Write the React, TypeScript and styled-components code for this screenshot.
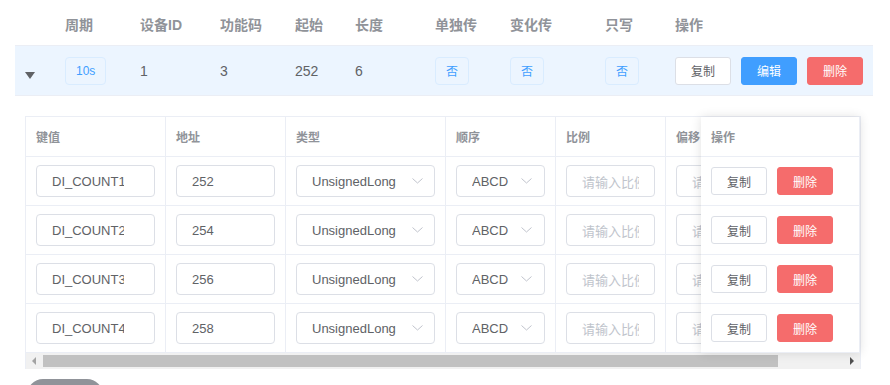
import React from "react";
import styled, { createGlobalStyle } from "styled-components";

const GlobalStyle = createGlobalStyle`
  html, body {
    margin: 0;
    padding: 0;
    background: #fff;
    font-family: "Liberation Sans", "Noto Sans CJK SC", sans-serif;
  }
`;

const Page = styled.div`
  width: 890px;
  height: 385px;
  overflow: hidden;
  padding-left: 15px;
  box-sizing: border-box;
`;

const OuterTable = styled.div`
  width: 858px;
`;

const HeadRow = styled.div`
  display: flex;
  height: 46px;
  border-bottom: 1px solid #ebeef5;
  box-sizing: border-box;
`;

const MainRow = styled.div`
  display: flex;
  height: 50px;
  background: #ecf5ff;
  border-bottom: 1px solid #ebeef5;
  box-sizing: border-box;
`;

const Cell = styled.div<{ $w?: number; $head?: boolean }>`
  ${(p) => (p.$w ? `width: ${p.$w}px; flex: none;` : "flex: 1;")}
  display: flex;
  align-items: center;
  gap: 10px;
  padding-left: 10px;
  box-sizing: border-box;
  font-size: 14px;
  color: ${(p) => (p.$head ? "#909399" : "#606266")};
  font-weight: ${(p) => (p.$head ? 700 : 400)};
  padding-top: ${(p) => (p.$head ? "2px" : "0")};
`;

const Caret = styled.span`
  width: 0;
  height: 0;
  border-left: 5.5px solid transparent;
  border-right: 5.5px solid transparent;
  border-top: 7px solid #606266;
  margin-top: 10px;
`;

const Tag = styled.span`
  display: inline-flex;
  align-items: center;
  height: 28px;
  padding: 0 10px;
  box-sizing: border-box;
  border: 1px solid #d9ecff;
  background: #ecf5ff;
  color: #409eff;
  border-radius: 4px;
  font-size: 12px;
`;

const Button = styled.button<{ $kind?: "default" | "primary" | "danger" }>`
  width: 56px;
  height: 28px;
  padding: 0;
  border-radius: 3px;
  font-size: 12px;
  font-family: inherit;
  box-sizing: border-box;
  cursor: pointer;
  border: 1px solid
    ${(p) => (p.$kind === "primary" ? "#409eff" : p.$kind === "danger" ? "#f56c6c" : "#dcdfe6")};
  background: ${(p) => (p.$kind === "primary" ? "#409eff" : p.$kind === "danger" ? "#f56c6c" : "#fff")};
  color: ${(p) => (p.$kind && p.$kind !== "default" ? "#fff" : "#606266")};
`;

const Expanded = styled.div`
  padding: 20px 0 0 10px;
`;

const InnerWrap = styled.div`
  position: relative;
  width: 836px;
  border-left: 1px solid #ebeef5;
  border-right: 1px solid #ebeef5;
  border-top: 1px solid #ebeef5;
  box-sizing: border-box;
`;

const Scroller = styled.div`
  overflow: hidden;
`;

const InnerTable = styled.div`
  width: 1200px;
`;

const IRow = styled.div<{ $head?: boolean }>`
  display: flex;
  height: ${(p) => (p.$head ? 40 : 49)}px;
`;

const ICell = styled.div<{ $w: number }>`
  width: ${(p) => p.$w}px;
  flex: none;
  display: flex;
  align-items: center;
  gap: 10px;
  padding: 0 10px;
  box-sizing: border-box;
  border-right: 1px solid #ebeef5;
  border-bottom: 1px solid #ebeef5;
  font-size: 12px;
  font-weight: 700;
  color: #909399;
`;

const Field = styled.div<{ $placeholder?: boolean; $pr?: number }>`
  flex: 1;
  min-width: 0;
  height: 32px;
  display: flex;
  align-items: center;
  padding: 0 ${(p) => p.$pr ?? 15}px 0 15px;
  border: 1px solid #dcdfe6;
  border-radius: 4px;
  box-sizing: border-box;
  font-size: 13px;
  font-weight: 400;
  color: ${(p) => (p.$placeholder ? "#c0c4cc" : "#606266")};
  background: #fff;
  overflow: hidden;
  white-space: nowrap;
`;

const FieldText = styled.span`
  flex: 1;
  overflow: hidden;
`;

const FixedCol = styled.div`
  position: absolute;
  top: 0;
  right: 0;
  width: 159px;
  background: #fff;
  box-shadow: 0 0 10px rgba(0, 0, 0, 0.12);
`;

const ScrollBar = styled.div`
  display: flex;
  align-items: center;
  height: 16px;
  background: #f1f1f1;
`;

const Arrow = styled.span<{ $dir: "left" | "right"; $dark?: boolean }>`
  width: 0;
  height: 0;
  border-top: 4px solid transparent;
  border-bottom: 4px solid transparent;
  ${(p) =>
    p.$dir === "left"
      ? `border-right: 4px solid ${p.$dark ? "#505050" : "#a3a3a3"}; margin: 0 7px 0 6px;`
      : `border-left: 4px solid ${p.$dark ? "#505050" : "#a3a3a3"}; margin: 0 6px 0 auto;`}
`;

const Thumb = styled.div`
  width: 735px;
  height: 12px;
  background: #c1c1c1;
`;

const Pill = styled.div`
  margin: 10px 0 0 2px;
  width: 76px;
  height: 32px;
  border-radius: 16px;
  background: #909399;
`;

const Chevron = () => (
  <svg width="11" height="6" viewBox="0 0 11 6">
    <polyline points="0.5,0.5 5.5,5 10.5,0.5" fill="none" stroke="#c0c4cc" strokeWidth="1" />
  </svg>
);

const rows = [
  { key: "DI_COUNT1", addr: "252" },
  { key: "DI_COUNT2", addr: "254" },
  { key: "DI_COUNT3", addr: "256" },
  { key: "DI_COUNT4", addr: "258" },
];

const outerCols = [
  { w: 40, label: "" },
  { w: 75, label: "周期" },
  { w: 80, label: "设备ID" },
  { w: 75, label: "功能码" },
  { w: 60, label: "起始" },
  { w: 80, label: "长度" },
  { w: 75, label: "单独传" },
  { w: 95, label: "变化传" },
  { w: 70, label: "只写" },
];

const innerCols = [
  { w: 140, label: "键值" },
  { w: 120, label: "地址" },
  { w: 160, label: "类型" },
  { w: 110, label: "顺序" },
  { w: 110, label: "比例" },
  { w: 120, label: "偏移" },
  { w: 110, label: "小数位" },
  { w: 110, label: "单位" },
];

export default function App() {
  return (
    <>
      <GlobalStyle />
      <Page>
        <OuterTable>
          <HeadRow>
            {outerCols.map((c, i) => (
              <Cell key={i} $w={c.w} $head>
                {c.label}
              </Cell>
            ))}
            <Cell $head>操作</Cell>
          </HeadRow>
          <MainRow>
            <Cell $w={40}>
              <Caret />
            </Cell>
            <Cell $w={75}>
              <Tag>10s</Tag>
            </Cell>
            <Cell $w={80}>1</Cell>
            <Cell $w={75}>3</Cell>
            <Cell $w={60}>252</Cell>
            <Cell $w={80}>6</Cell>
            <Cell $w={75}>
              <Tag>否</Tag>
            </Cell>
            <Cell $w={95}>
              <Tag>否</Tag>
            </Cell>
            <Cell $w={70}>
              <Tag>否</Tag>
            </Cell>
            <Cell>
              <Button>复制</Button>
              <Button $kind="primary">编辑</Button>
              <Button $kind="danger">删除</Button>
            </Cell>
          </MainRow>

          <Expanded>
            <InnerWrap>
              <Scroller>
                <InnerTable>
                  <IRow $head>
                    {innerCols.map((c) => (
                      <ICell key={c.label} $w={c.w}>
                        {c.label}
                      </ICell>
                    ))}
                  </IRow>
                  {rows.map((r) => (
                    <IRow key={r.key}>
                      <ICell $w={140}>
                        <Field $pr={30}>
                          <FieldText>{r.key}</FieldText>
                        </Field>
                      </ICell>
                      <ICell $w={120}>
                        <Field>
                          <FieldText>{r.addr}</FieldText>
                        </Field>
                      </ICell>
                      <ICell $w={160}>
                        <Field $pr={11}>
                          <FieldText>UnsignedLong</FieldText>
                          <Chevron />
                        </Field>
                      </ICell>
                      <ICell $w={110}>
                        <Field $pr={12}>
                          <FieldText>ABCD</FieldText>
                          <Chevron />
                        </Field>
                      </ICell>
                      <ICell $w={110}>
                        <Field $placeholder>
                          <FieldText>请输入比例</FieldText>
                        </Field>
                      </ICell>
                      <ICell $w={120}>
                        <Field $placeholder>
                          <FieldText>请输入偏移</FieldText>
                        </Field>
                      </ICell>
                      <ICell $w={110}>
                        <Field $placeholder>
                          <FieldText>请输入</FieldText>
                        </Field>
                      </ICell>
                      <ICell $w={110}>
                        <Field $placeholder>
                          <FieldText>请输入</FieldText>
                        </Field>
                      </ICell>
                    </IRow>
                  ))}
                </InnerTable>
              </Scroller>
              <FixedCol>
                <IRow $head>
                  <ICell $w={159}>操作</ICell>
                </IRow>
                {rows.map((r) => (
                  <IRow key={r.key}>
                    <ICell $w={159}>
                      <Button>复制</Button>
                      <Button $kind="danger">删除</Button>
                    </ICell>
                  </IRow>
                ))}
              </FixedCol>
              <ScrollBar>
                <Arrow $dir="left" />
                <Thumb />
                <Arrow $dir="right" $dark />
              </ScrollBar>
            </InnerWrap>
            <Pill />
          </Expanded>
        </OuterTable>
      </Page>
    </>
  );
}
